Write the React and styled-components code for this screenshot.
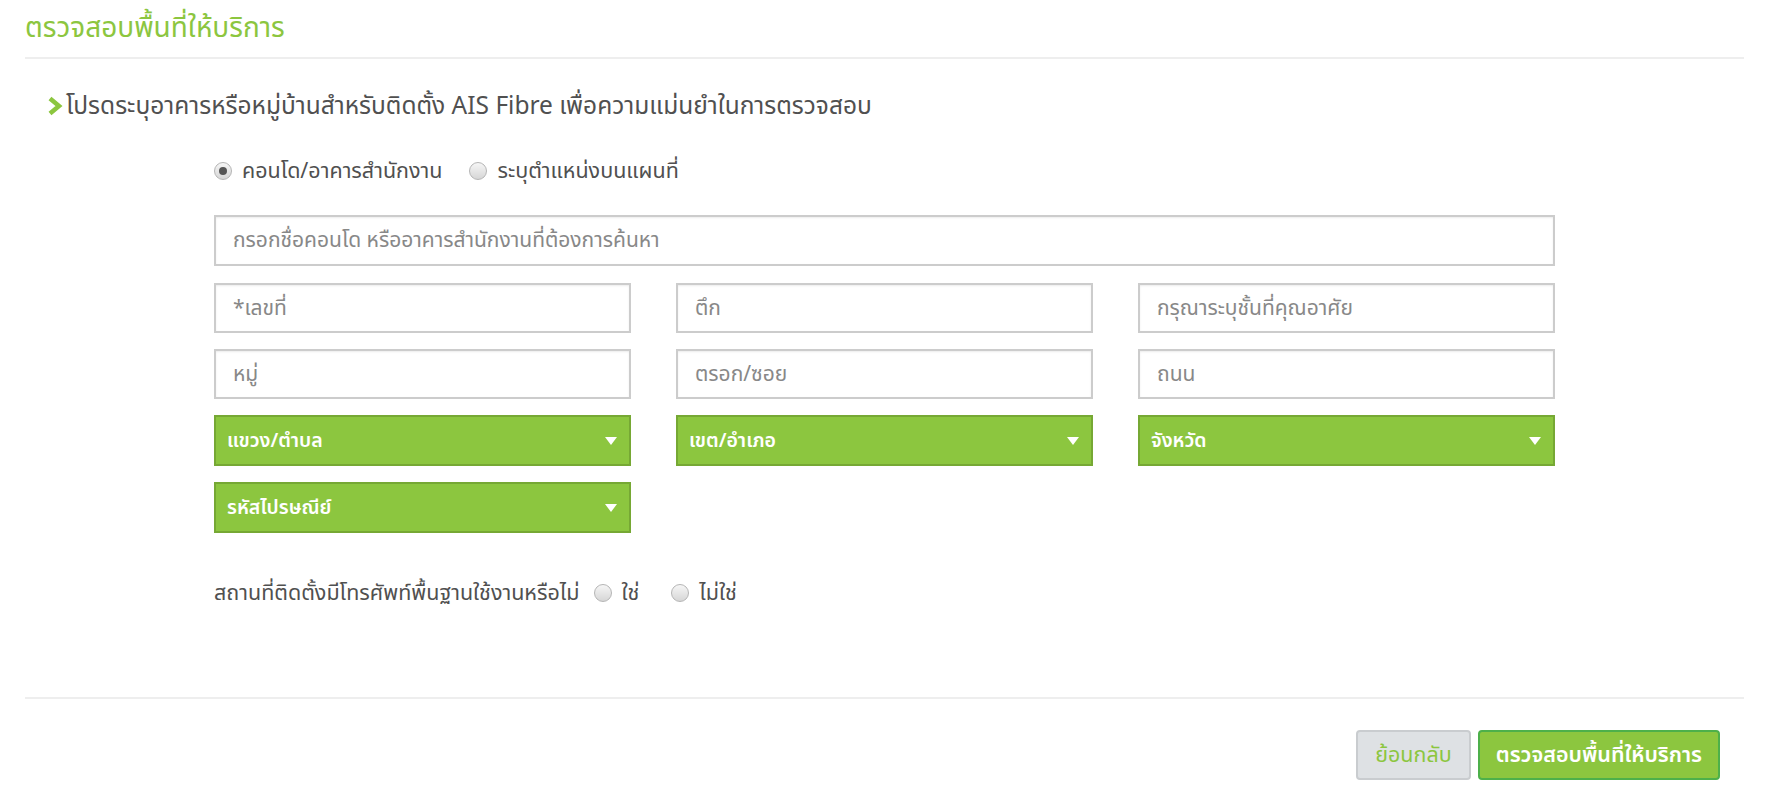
import styled, { createGlobalStyle } from 'styled-components';

const GlobalStyle = createGlobalStyle`
  body {
    margin: 0;
    background: #ffffff;
    font-family: 'Noto Sans Thai', 'Noto Sans', 'DejaVu Sans', sans-serif;
    color: #555555;
  }
`;

const Page = styled.div`
  width: 1776px;
  height: 796px;
  padding: 0 32px 0 25px;
  box-sizing: border-box;
`;

const Header = styled.div`
  height: 59px;
  border-bottom: 2px solid #eeeeee;
  display: flex;
  align-items: center;
  box-sizing: border-box;
`;

const Title = styled.h1`
  margin: 0;
  font-size: 28px;
  font-weight: 400;
  color: #8cc63f;
`;

const Instruction = styled.div`
  display: flex;
  align-items: center;
  gap: 3px;
  margin: 35px 0 0 22px;
  height: 24px;
  font-size: 24.5px;
  color: #505050;
`;

const FormBody = styled.div`
  margin-left: 189px;
  width: 1341px;
`;

const RadioRow = styled.div`
  display: flex;
  align-items: center;
  gap: ${(p) => p.gap || 27}px;
  height: 24px;
  margin-top: ${(p) => p.top || 0}px;
  font-size: 21.5px;
`;

const RadioLabel = styled.label`
  display: flex;
  align-items: center;
  gap: 10px;
  color: #505050;
`;

const RadioDot = styled.span`
  width: 18px;
  height: 18px;
  border-radius: 50%;
  border: 1px solid #b5b5b5;
  background: linear-gradient(#f6f6f6, #d6d6d6);
  box-sizing: border-box;
  display: flex;
  align-items: center;
  justify-content: center;
  &::after {
    content: '';
    width: 8px;
    height: 8px;
    border-radius: 50%;
    background: ${(p) => (p.checked ? '#555555' : 'transparent')};
  }
`;

const TextInput = styled.input`
  display: block;
  width: 100%;
  height: ${(p) => p.h || 50}px;
  box-sizing: border-box;
  border: 2px solid #cccccc;
  box-shadow: inset 0 1px 2px rgba(0, 0, 0, 0.08);
  padding: 0 17px;
  font-family: inherit;
  font-size: 21px;
  color: #555555;
  outline: none;
  &::placeholder {
    color: #888888;
  }
`;

const SearchBox = styled.div`
  margin-top: 32px;
`;

const Grid = styled.div`
  display: grid;
  grid-template-columns: repeat(3, 1fr);
  column-gap: 45px;
  row-gap: 16px;
  margin-top: 17px;
`;

const Select = styled.div`
  height: 51px;
  box-sizing: border-box;
  background: #8cc63f;
  border: 2px solid #76a834;
  display: flex;
  align-items: center;
  justify-content: space-between;
  padding: 0 12px 0 11px;
  color: #ffffff;
  font-size: 19.5px;
  font-weight: 600;
`;

const Arrow = styled.span`
  width: 0;
  height: 0;
  border-left: 6px solid transparent;
  border-right: 6px solid transparent;
  border-top: 8px solid #ffffff;
`;

const Question = styled.span`
  color: #505050;
`;

const Footer = styled.div`
  margin-top: 92px;
  border-top: 2px solid #eeeeee;
  padding: 31px 24px 0 0;
  display: flex;
  justify-content: flex-end;
  gap: 7px;
`;

const Button = styled.button`
  height: 50px;
  padding: 0 ${(p) => (p.primary ? 16 : 17)}px;
  border-radius: 4px;
  font-family: inherit;
  font-size: 21.5px;
  font-weight: ${(p) => (p.primary ? 600 : 400)};
  color: ${(p) => (p.primary ? '#ffffff' : '#8cc63f')};
  background: ${(p) => (p.primary ? '#8cc63f' : '#dee1e4')};
  border: 2px solid ${(p) => (p.primary ? '#4db04a' : '#c9cccf')};
  cursor: pointer;
`;

const Chevron = () => (
  <svg width="16" height="20" viewBox="0 0 16 20">
    <path d="M3 2.5 L12 10 L3 17.5" fill="none" stroke="#8cc63f" strokeWidth="4.5" />
  </svg>
);

const selects = ['แขวง/ตำบล', 'เขต/อำเภอ', 'จังหวัด', 'รหัสไปรษณีย์'];

export default function App() {
  return (
    <Page>
      <GlobalStyle />
      <Header>
        <Title>ตรวจสอบพื้นที่ให้บริการ</Title>
      </Header>
      <Instruction>
        <Chevron />
        โปรดระบุอาคารหรือหมู่บ้านสำหรับติดตั้ง AIS Fibre เพื่อความแม่นยำในการตรวจสอบ
      </Instruction>
      <FormBody>
        <RadioRow top={41}>
          <RadioLabel>
            <RadioDot checked />
            คอนโด/อาคารสำนักงาน
          </RadioLabel>
          <RadioLabel>
            <RadioDot />
            ระบุตำแหน่งบนแผนที่
          </RadioLabel>
        </RadioRow>
        <SearchBox>
          <TextInput h={51} placeholder="กรอกชื่อคอนโด หรืออาคารสำนักงานที่ต้องการค้นหา" />
        </SearchBox>
        <Grid>
          <TextInput placeholder="*เลขที่" />
          <TextInput placeholder="ตึก" />
          <TextInput placeholder="กรุณาระบุชั้นที่คุณอาศัย" />
          <TextInput placeholder="หมู่" />
          <TextInput placeholder="ตรอก/ซอย" />
          <TextInput placeholder="ถนน" />
          {selects.map((s) => (
            <Select key={s}>
              {s}
              <Arrow />
            </Select>
          ))}
        </Grid>
        <RadioRow top={48} gap={14}>
          <Question>สถานที่ติดตั้งมีโทรศัพท์พื้นฐานใช้งานหรือไม่</Question>
          <RadioLabel>
            <RadioDot />
            ใช่
          </RadioLabel>
          <RadioLabel style={{ marginLeft: 18 }}>
            <RadioDot />
            ไม่ใช่
          </RadioLabel>
        </RadioRow>
      </FormBody>
      <Footer>
        <Button>ย้อนกลับ</Button>
        <Button primary>ตรวจสอบพื้นที่ให้บริการ</Button>
      </Footer>
    </Page>
  );
}
